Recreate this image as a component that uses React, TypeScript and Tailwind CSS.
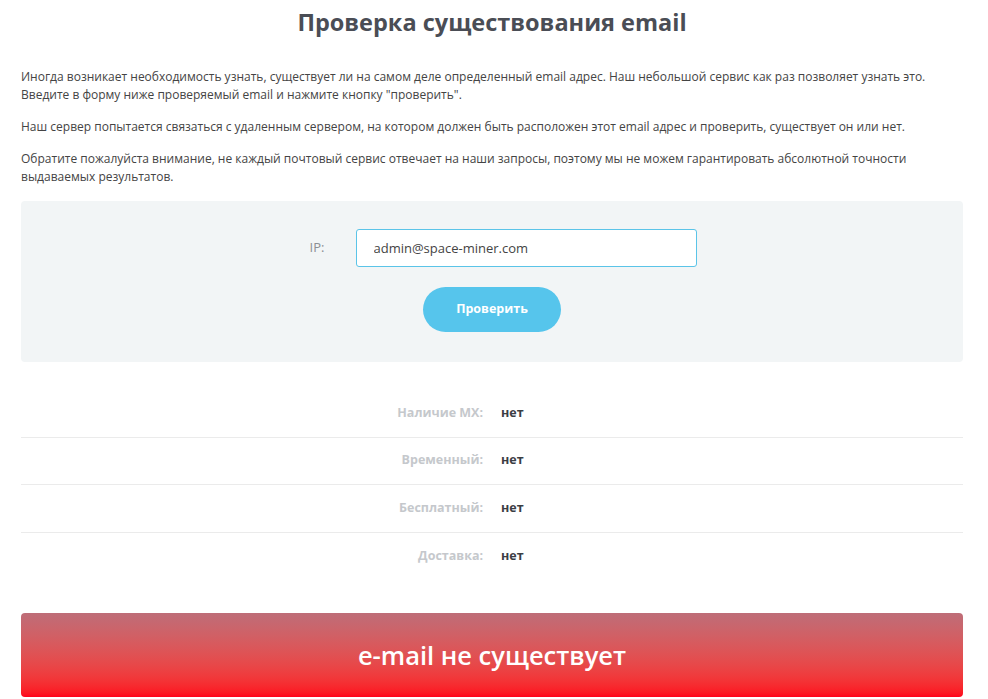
const rows = [
  { label: 'Наличие MX:', value: 'нет' },
  { label: 'Временный:', value: 'нет' },
  { label: 'Бесплатный:', value: 'нет' },
  { label: 'Доставка:', value: 'нет' },
];

export default function App() {
  return (
    <div className="min-h-screen bg-white font-['Open_Sans',sans-serif] text-[#444]">
      <div className="mx-[21px] w-[942px]">
        <h1 className="pt-[6px] text-center text-[23.5px] leading-[32px] font-bold text-[#4a4d55]">
          Проверка существования email
        </h1>

        <div className="mt-[30px] text-[12px] leading-[18px] text-[#444]">
          <p>
            Иногда возникает необходимость узнать, существует ли на самом деле определенный email адрес. Наш небольшой сервис как раз позволяет узнать это.
            <br />
            Введите в форму ниже проверяемый email и нажмите кнопку "проверить".
          </p>
          <p className="mt-[14px]">
            Наш сервер попытается связаться с удаленным сервером, на котором должен быть расположен этот email адрес и проверить, существует он или нет.
          </p>
          <p className="mt-[14px] w-[905px]">
            Обратите пожалуйста внимание, не каждый почтовый сервис отвечает на наши запросы, поэтому мы не можем гарантировать абсолютной точности выдаваемых результатов.
          </p>
        </div>

        {/* form */}
        <div className="mt-[15px] flex h-[161px] flex-col items-center rounded-[4px] bg-[#f2f5f6] pt-[28px]">
          <div className="ml-[22px] flex items-center">
            <label className="w-[46px] text-[13px] text-[#8c8f94]">IP:</label>
            <input
              className="h-[38px] w-[341px] rounded-[3px] border border-[#5bc4e8] bg-white px-[17px] text-[13px] text-[#444] outline-none"
              defaultValue="admin@space-miner.com"
            />
          </div>
          <button className="mt-[20px] h-[45px] w-[138px] rounded-full bg-[#56c5ec] text-[12.5px] font-bold text-white">
            Проверить
          </button>
        </div>

        {/* results */}
        <div className="mt-[28px]">
          {rows.map((r, i) => (
            <div
              key={r.label}
              className={`flex h-[47.5px] items-center text-[12.5px] font-bold ${
                i < rows.length - 1 ? 'border-b border-[#ebebeb]' : ''
              }`}
            >
              <div className="w-[462px] text-right text-[#c5c8cc]">{r.label}</div>
              <div className="ml-[18px] text-[#3b3e44]">{r.value}</div>
            </div>
          ))}
        </div>

        <div className="mt-[33px] flex h-[84px] items-center justify-center rounded-[4px] bg-gradient-to-b from-[#be6d78] to-[#ff0019]">
          <span className="text-[25.5px] font-semibold text-white">e-mail не существует</span>
        </div>
      </div>
    </div>
  );
}
